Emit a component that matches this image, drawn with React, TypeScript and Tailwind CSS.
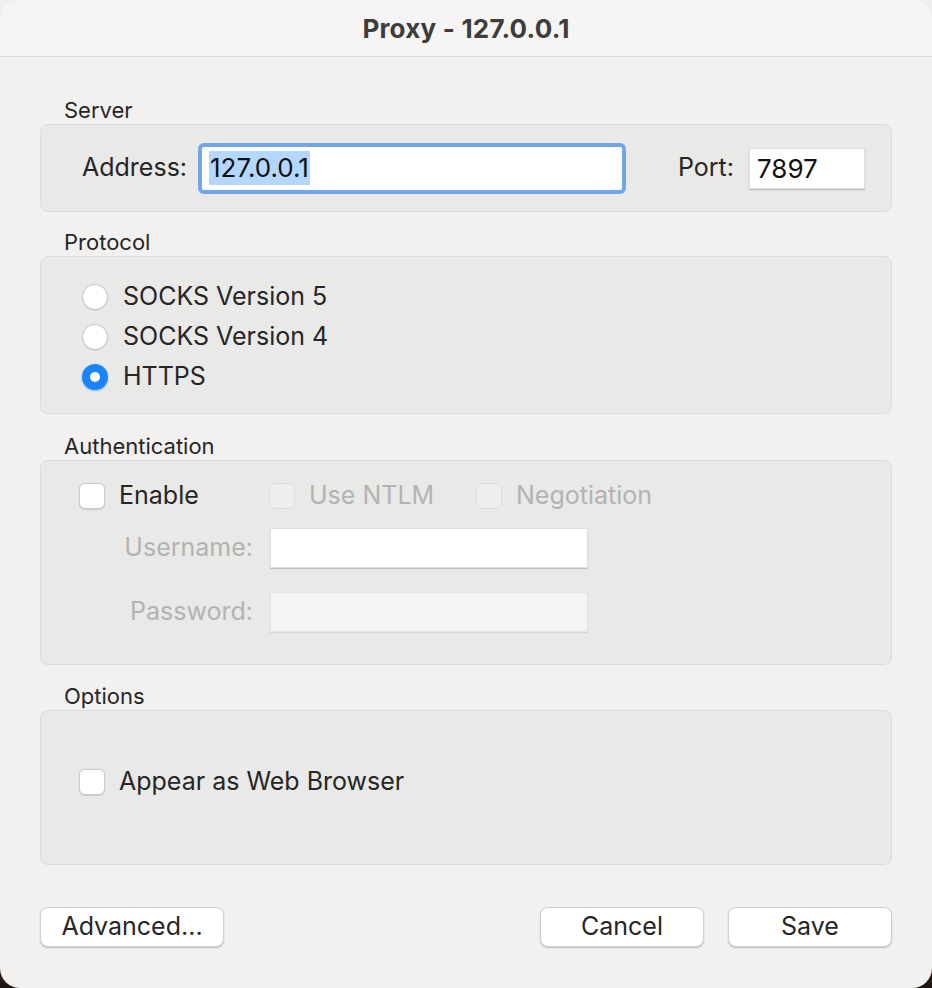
import React from 'react';

const font = { fontFamily: 'Inter, "Noto Sans", sans-serif' };

function SectionLabel({ children }: { children: React.ReactNode }) {
  return <div className="h-[24px] leading-[24px] pl-[24px] text-[22px] text-[#262626] mb-[2px]">{children}</div>;
}

function Group({ className, children }: { className?: string; children: React.ReactNode }) {
  return (
    <div className={`rounded-[8px] border border-[#dcdcdb] bg-[#e9e9e8] ${className ?? ''}`}>
      {children}
    </div>
  );
}

function Radio({ checked, label }: { checked?: boolean; label: string }) {
  return (
    <div className="flex h-[40px] items-center gap-[15px]">
      {checked ? (
        <span className="flex h-[26px] w-[26px] items-center justify-center rounded-full bg-[#1b84fc] shadow-[0_1px_2px_rgba(0,80,200,0.35)]">
          <span className="h-[10px] w-[10px] rounded-full bg-white" />
        </span>
      ) : (
        <span className="h-[26px] w-[26px] rounded-full border border-[#c9c9c9] bg-white shadow-[0_0.5px_1px_rgba(0,0,0,0.12)]" />
      )}
      <span className="text-[25px] text-[#262626]">{label}</span>
    </div>
  );
}

function Check({ label, disabled, width }: { label: string; disabled?: boolean; width?: string }) {
  return (
    <div className={`flex items-center gap-[14px] ${width ?? ''}`}>
      <span
        className={`h-[26px] w-[26px] rounded-[6px] border ${
          disabled ? 'border-[#dedede] bg-[#eeeeed]' : 'border-[#c9c9c9] bg-white shadow-[0_0.5px_1px_rgba(0,0,0,0.12)]'
        }`}
      />
      <span className={`text-[25px] ${disabled ? 'text-[#b3b3b3]' : 'text-[#262626]'}`}>{label}</span>
    </div>
  );
}

function Button({ label, width }: { label: string; width: string }) {
  return (
    <button
      className={`${width} h-[40px] rounded-[8px] border-[0.5px] border-[#d2d2d2] bg-white text-[25px] text-[#262626] shadow-[0_1px_1.5px_rgba(0,0,0,0.22)]`}
    >
      {label}
    </button>
  );
}

export default function App() {
  return (
    <div
      className="w-[932px] h-[988px] bg-[linear-gradient(to_bottom,#efefef_0%,#efefef_94%,#3b2c22_97%,#1c1410_100%)]"
      style={font}
    >
      <div className="flex h-full w-full flex-col overflow-hidden rounded-[20px] bg-[#f2f1f0]">
        {/* Title bar */}
        <div className="flex h-[57px] shrink-0 items-center justify-center border-b border-[#dbdad9] bg-[#f6f5f4]">
          <span className="text-[26px] font-bold tracking-[0.2px] text-[#3d3d3d]">Proxy - 127.0.0.1</span>
        </div>

        <div className="flex flex-col px-[40px] pt-[41px]">
          {/* Server */}
          <SectionLabel>Server</SectionLabel>
          <Group className="flex h-[88px] items-center pl-[41px] pr-[26px]">
            <span className="text-[25px] text-[#262626]">Address:</span>
            <div className="ml-[11px] flex h-[51px] w-[428px] items-center rounded-[6px] bg-[#73a5ec] p-[4px]">
              <div className="flex h-full w-full items-center rounded-[2px] bg-white pl-[7px]">
                <span className="bg-[#b3d7ff] px-[1px] text-[26px] leading-[34px] text-[#111]">127.0.0.1</span>
              </div>
            </div>
            <span className="ml-auto text-[25px] text-[#262626]">Port:</span>
            <div className="ml-[15px] flex h-[41px] w-[116px] items-center bg-white pl-[7px] shadow-[0_1px_1px_rgba(0,0,0,0.18)] border-[0.5px] border-[#e0e0e0]">
              <span className="text-[26px] text-[#111]">7897</span>
            </div>
          </Group>

          {/* Protocol */}
          <div className="mt-[18px]">
            <SectionLabel>Protocol</SectionLabel>
          </div>
          <Group className="flex h-[158px] flex-col pl-[41px] pt-[20px]">
            <Radio label="SOCKS Version 5" />
            <Radio label="SOCKS Version 4" />
            <Radio label="HTTPS" checked />
          </Group>

          {/* Authentication */}
          <div className="mt-[20px]">
            <SectionLabel>Authentication</SectionLabel>
          </div>
          <Group className="flex h-[205px] flex-col pt-[15px]">
            <div className="flex h-[40px] items-center pl-[38px]">
              <Check label="Enable" width="w-[190px]" />
              <Check label="Use NTLM" disabled width="w-[207px]" />
              <Check label="Negotiation" disabled />
            </div>
            <div className="mt-[12px] flex items-center">
              <span className="w-[212px] text-right text-[25px] text-[#b3b3b3]">Username:</span>
              <div className="ml-[17px] h-[40px] w-[318px] border-[0.5px] border-[#dedede] bg-white shadow-[0_1px_1px_rgba(0,0,0,0.16)]" />
            </div>
            <div className="mt-[24px] flex items-center">
              <span className="w-[212px] text-right text-[25px] text-[#b3b3b3]">Password:</span>
              <div className="ml-[17px] h-[40px] w-[318px] border-[0.5px] border-[#e4e4e4] bg-[#f4f4f3] shadow-[0_1px_1px_rgba(0,0,0,0.08)]" />
            </div>
          </Group>

          {/* Options */}
          <div className="mt-[19px]">
            <SectionLabel>Options</SectionLabel>
          </div>
          <Group className="flex h-[155px] items-center pb-[11px] pl-[38px]">
            <Check label="Appear as Web Browser" />
          </Group>

          {/* Buttons */}
          <div className="mt-[42px] flex items-center">
            <Button label="Advanced..." width="w-[184px]" />
            <div className="ml-auto flex gap-[24px]">
              <Button label="Cancel" width="w-[164px]" />
              <Button label="Save" width="w-[164px]" />
            </div>
          </div>
        </div>
      </div>
    </div>
  );
}
